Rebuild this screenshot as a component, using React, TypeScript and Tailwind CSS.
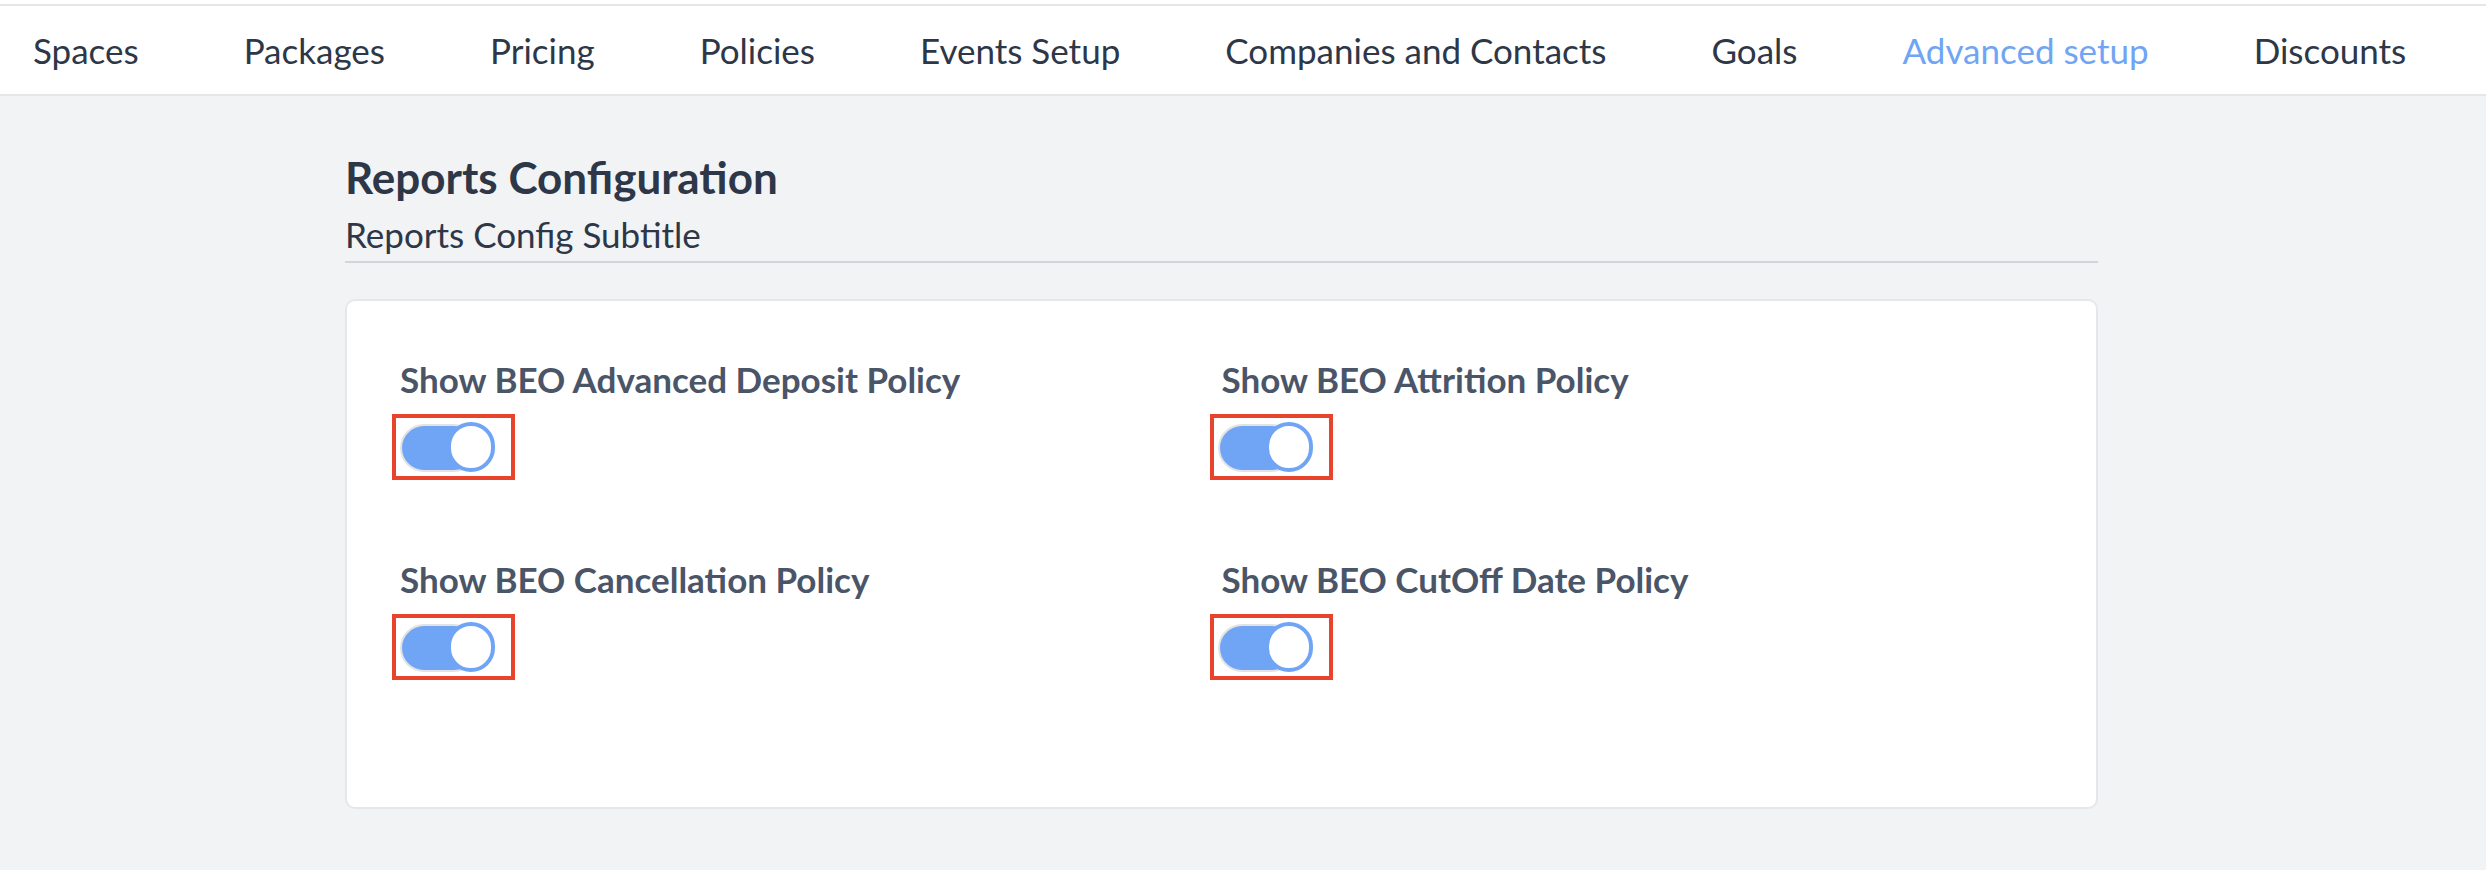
const tabs = [
  "Spaces",
  "Packages",
  "Pricing",
  "Policies",
  "Events Setup",
  "Companies and Contacts",
  "Goals",
  "Advanced setup",
  "Discounts",
];

const fields = [
  "Show BEO Advanced Deposit Policy",
  "Show BEO Attrition Policy",
  "Show BEO Cancellation Policy",
  "Show BEO CutOff Date Policy",
];

const Toggle = () => (
  <div className="relative w-[95px] h-[51px]">
    <div className="absolute left-0 top-[2px] w-[78px] h-[48px] rounded-full bg-[#70a5f5] border-2 border-[#e3e3e3] border-r-0" />
    <div className="absolute right-0 top-0 w-[48px] h-[50px] rounded-full bg-white border-[4px] border-[#70a5f5]" />
    {/* annotation box */}
    <div className="absolute -left-[8px] -top-[8px] w-[123px] h-[66px] border-[4px] border-[#e8432c]" />
  </div>
);

export default function App() {
  return (
    <div
      className="min-h-screen bg-[#f2f3f5] text-[#2d3748]"
      style={{ fontFamily: "Lato, 'Open Sans', sans-serif" }}
    >
      <div className="h-[4px] bg-white" />
      <nav className="h-[92px] bg-white border-t-2 border-b-2 border-[#e6e6e6] flex items-center pl-[33px] gap-[105px]">
        {tabs.map((t) => (
          <span
            key={t}
            className={
              "text-[35px] leading-[41px] whitespace-nowrap " +
              (t === "Advanced setup" ? "text-[#6fa5f4]" : "text-[#2d3748]")
            }
          >
            {t}
          </span>
        ))}
      </nav>

      <div className="ml-[345px] w-[1753px] pt-[55px]">
        <h1 className="text-[44px] leading-[53px] font-bold text-[#2d3748]">
          Reports Configuration
        </h1>
        <div className="mt-[10px] pb-[6px] border-b-2 border-[#d3d5da]">
          <p className="text-[35px] leading-[41px] text-[#2d3748]">
            Reports Config Subtitle
          </p>
        </div>

        <div className="mt-[36px] bg-white border-2 border-[#e5e7eb] rounded-[10px] px-[53px] pt-[58px] pb-[134px]">
          <div className="grid grid-cols-2 gap-y-[86px]">
            {fields.map((f, i) => (
              <div key={f}>
                <div className="text-[35px] leading-[41px] font-bold text-[#4a5568] whitespace-nowrap">
                  {f}
                </div>
                <div className={i % 2 === 1 ? "mt-[22px] -ml-[4px]" : "mt-[22px]"}>
                  <Toggle />
                </div>
              </div>
            ))}
          </div>
        </div>
      </div>
    </div>
  );
}
